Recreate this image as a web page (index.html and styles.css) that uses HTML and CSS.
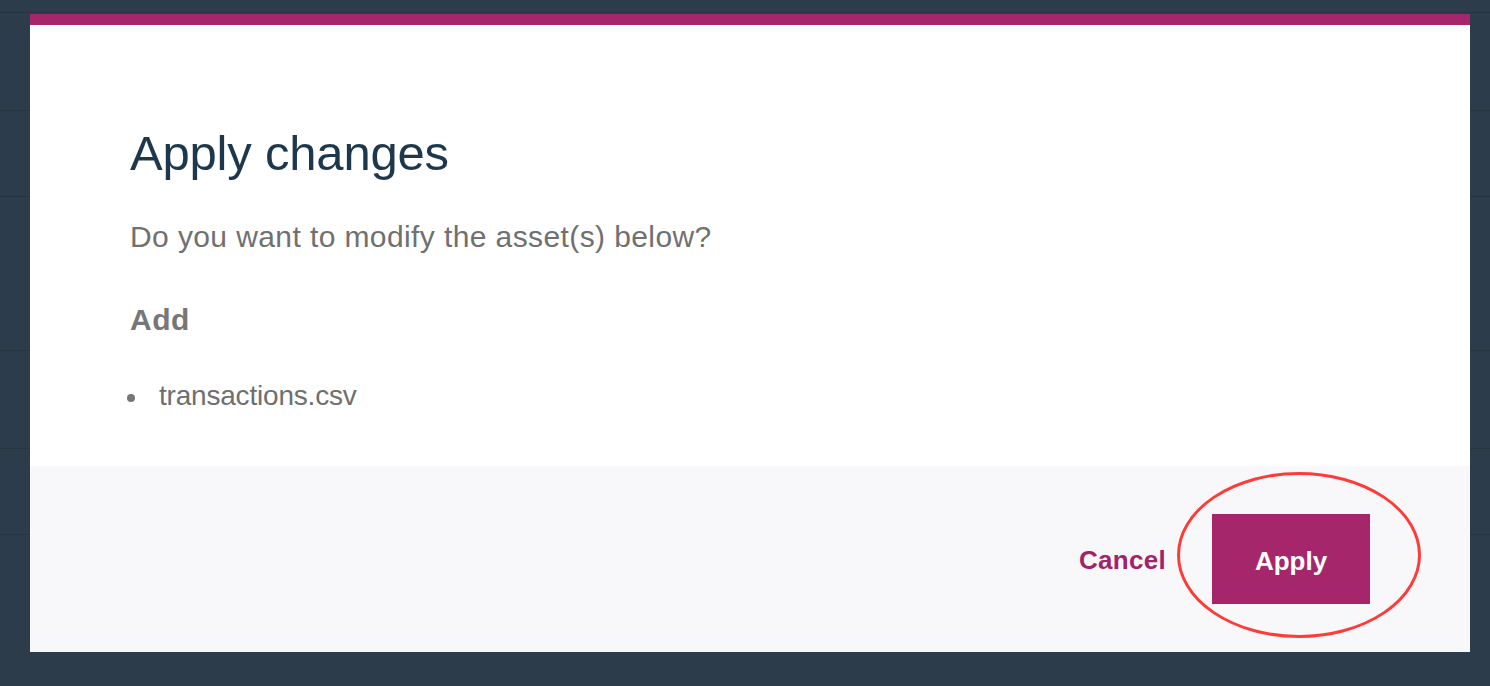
FILE: index.html
```html
<!DOCTYPE html>
<html lang="en">
<head>
<meta charset="utf-8">
<title>Apply changes</title>
<link rel="stylesheet" href="styles.css">
</head>
<body>
<div class="backdrop">
  <div class="bg-row r1"></div>
  <div class="bg-row r2"></div>
  <div class="bg-row r3"></div>
  <div class="bg-row r4"></div>
  <div class="bg-row r5"></div>
  <div class="bg-row r6"></div>
</div>
<div class="modal">
  <div class="modal-bar"></div>
  <div class="modal-body">
    <h1 class="title">Apply changes</h1>
    <p class="subtitle">Do you want to modify the asset(s) below?</p>
    <h2 class="section">Add</h2>
    <ul class="assets">
      <li class="asset">transactions.csv</li>
    </ul>
  </div>
  <div class="modal-footer">
    <div class="actions">
      <a class="cancel" href="#">Cancel</a>
      <button class="apply" type="button">Apply</button>
      <svg class="highlight" width="250" height="170" viewBox="0 0 250 170" aria-hidden="true">
        <ellipse cx="125" cy="85" rx="120.5" ry="81.5" fill="none" stroke="#fd3c3a" stroke-width="3"/>
      </svg>
    </div>
  </div>
</div>
</body>
</html>
```
FILE: styles.css
```css
* { box-sizing: border-box; }
html, body { margin: 0; padding: 0; }
body {
  width: 1490px;
  height: 686px;
  overflow: hidden;
  background: #2c3c4a;
  font-family: "Liberation Sans", Arial, sans-serif;
  position: relative;
}
.backdrop { display: flex; flex-direction: column; }
.bg-row { border-bottom: 1px solid #27353f; }
.r1 { height: 13px; }
.r2 { height: 98px; }
.r3 { height: 86px; }
.r4 { height: 154px; }
.r5 { height: 98px; }
.r6 { height: 86px; }

.modal {
  position: absolute;
  top: 14px;
  left: 30px;
  width: 1440px;
  display: flex;
  flex-direction: column;
}
.modal-bar { height: 11px; background: #a6266b; }
.modal-body {
  background: #ffffff;
  height: 441px;
  padding: 98px 100px 0 100px;
}
.title {
  margin: 0;
  font-size: 49px;
  line-height: 60px;
  font-weight: normal;
  color: #1d374c;
  letter-spacing: -0.2px;
}
.subtitle {
  margin: 34px 0 0 0;
  font-size: 30px;
  line-height: 40px;
  color: #707070;
  letter-spacing: 0.4px;
}
.section {
  margin: 43px 0 0 0;
  font-size: 30px;
  line-height: 40px;
  font-weight: bold;
  color: #777777;
  letter-spacing: 0.5px;
}
.assets {
  list-style: none;
  margin: 37px 0 0 0;
  padding: 0;
}
.asset {
  display: flex;
  align-items: center;
  font-size: 28px;
  line-height: 38px;
  color: #6f6f6f;
  letter-spacing: -0.2px;
}
.asset::before {
  content: "";
  width: 8px;
  height: 8px;
  border-radius: 50%;
  background: #777777;
  margin: 4px 24px 0 -3px;
  flex: none;
}
.modal-footer {
  background: #f8f8fa;
  height: 186px;
  padding: 0 100px;
  display: flex;
  align-items: center;
  justify-content: flex-end;
}
.actions {
  position: relative;
  display: flex;
  align-items: center;
  gap: 46px;
}
.cancel {
  color: #a1246a;
  font-size: 26px;
  font-weight: bold;
  text-decoration: none;
  letter-spacing: 0.3px;
  margin-top: 2px;
}
.apply {
  width: 158px;
  height: 90px;
  border: none;
  background: #a6266b;
  color: #ffffff;
  font-family: "Liberation Sans", Arial, sans-serif;
  font-size: 26px;
  font-weight: bold;
  letter-spacing: 0;
  padding: 0;
  padding-top: 4px;
}
.highlight {
  position: absolute;
  right: -54px;
  top: -44px;
  pointer-events: none;
}
```
